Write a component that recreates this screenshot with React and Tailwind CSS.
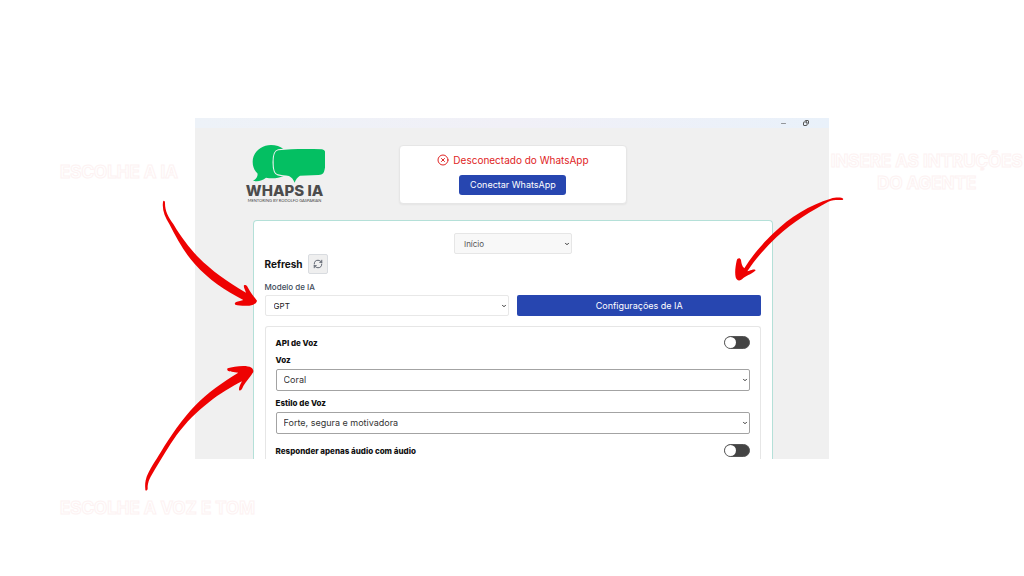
import { RefreshCw, CircleX, ChevronDown, Minus, Copy } from 'lucide-react';
import clsx from 'clsx';

const ARROWS = [
  {
    id: 'modelo',
    transform: 'translate(40 150) scale(0.3333)',
    d: 'M369 156C370 150 375 152 375 158C375 185 385 200 400 222C425 265 450 295 475 322C515 362 560 395 618 428C616 420 610 412 612 406C618 402 622 408 624 413C632 428 642 440 651 452C650 460 640 466 628 467C612 469 595 466 586 464C581 459 588 455 600 453L610 450C555 422 505 388 465 343C435 310 412 270 388 222C374 200 366 180 369 156Z',
  },
  {
    id: 'config',
    transform: 'translate(710 140) scale(0.3333)',
    d: 'M400 177C396 172 380 171 362 176C300 195 240 230 190 280C150 318 125 350 103 385C95 378 94 368 93 360C90 352 82 354 80 362C76 380 74 398 77 412C80 424 92 424 100 414C112 406 130 400 137 391C136 386 125 389 118 392L112 394C135 358 165 325 200 291C250 245 305 212 355 185C372 178 388 181 398 180Z',
  },
  {
    id: 'voz',
    transform: 'translate(40 350) scale(0.3333)',
    d: 'M316 418C315 424 323 422 323 416C322 395 332 380 345 358C365 325 385 290 410 255C440 215 470 185 505 158C540 130 575 110 606 94C602 102 596 112 597 120C603 126 607 114 610 108C618 94 632 80 640 66C642 54 630 48 610 48C592 48 575 52 563 55C558 62 568 66 580 66L595 68C550 95 500 130 465 167C427 207 393 255 363 305C345 335 330 355 320 380C315 395 315 405 316 418Z',
  },
];

function Caption({ children }) {
  return (
    <p className="whitespace-nowrap text-[17px] leading-[22px] font-bold text-white [-webkit-text-stroke:1px_#fdf2f2]">
      {children}
    </p>
  );
}

function Logo() {
  return (
    <div className="flex w-20 flex-col items-center">
      <svg viewBox="0 0 240 114" className="h-[38px] w-20" fill="#04bf62" aria-hidden="true">
        <path d="M78 0C48 0 23 22 23 50C23 65 28 76 38 86C38 95 33 103 24 107C38 111 52 107 63 98C80 102 100 100 115 94L118 14C106 4 92 0 78 0Z" />
        <path
          stroke="#f0f0f0"
          strokeWidth="7"
          paintOrder="stroke"
          d="M100 16C140 11 190 11 230 13C238 14 242 20 242 28C242 45 242 65 237 80C235 87 228 89 220 90L165 92C158 96 152 103 149 113C145 103 140 97 132 93C120 92 108 90 99 88C88 86 86 70 86 52C86 34 88 18 100 16Z"
        />
      </svg>
      <span className="whitespace-nowrap text-[15px] leading-[15px] font-extrabold text-[#4c4c4c]">WHAPS IA</span>
      <span className="whitespace-nowrap font-['Lato',sans-serif] text-[4px] leading-[6px] text-[#444]">MENTORING BY RODOLFO GASPARIAN</span>
    </div>
  );
}

function Select({ id, value, label, className, wrapperClass }) {
  return (
    <div className={clsx('relative', wrapperClass)}>
      <select
        id={id}
        aria-label={label}
        defaultValue={value}
        className={clsx('block w-full appearance-none rounded-[2px] border leading-3', className)}
      >
        <option>{value}</option>
      </select>
      <ChevronDown className="pointer-events-none absolute top-1/2 right-[2px] size-[6px] -translate-y-1/2 text-[#333]" strokeWidth={4} />
    </div>
  );
}

function ToggleRow({ id, label }) {
  return (
    <div className="flex h-[13px] items-center justify-between">
      <label htmlFor={id} className="text-[8px] leading-3 font-extrabold">{label}</label>
      <input
        id={id}
        type="checkbox"
        role="switch"
        className="flex h-[13px] w-[26px] appearance-none items-center rounded-full border border-[#555] bg-[#444] before:size-[11px] before:rounded-full before:bg-white"
      />
    </div>
  );
}

function StatusCard() {
  return (
    <section className="flex flex-col items-center gap-2 rounded border border-[#e6e6e6] bg-white pt-[7px] pb-2 shadow-xs">
      <p className="flex items-center gap-1 text-[10px] leading-[14px] text-[#e02424]">
        <CircleX size={12} />
        Desconectado do WhatsApp
      </p>
      <button type="button" className="h-5 w-[107px] rounded-[3px] bg-[#2746b0] text-[9px] leading-3 text-white">
        Conectar WhatsApp
      </button>
    </section>
  );
}

function SettingsPanel() {
  return (
    <main className="mt-4 mr-14 ml-[58px] rounded-t border border-b-0 border-[#b4e0d8] bg-white px-[11px] pt-3">
      <Select
        id="pagina"
        label="Página"
        value="Início"
        wrapperClass="mx-auto w-[118px]"
        className="h-[21px] border-[#e6e6e6] bg-[#f8f8f8] pl-[9px] text-[8px] text-[#555]"
      />

      <div className="flex items-center gap-[5px]">
        <h1 className="text-[10px] leading-5 font-bold text-[#111]">Refresh</h1>
        <button type="button" aria-label="Refresh" className="grid size-5 place-items-center rounded-[2px] border border-[#d9dce0] bg-[#efefef] text-[#444c59]">
          <RefreshCw size={10} />
        </button>
      </div>

      <label htmlFor="modelo" className="mt-[7px] mb-[2px] block text-[8px] leading-3 font-medium text-[#414b5a]">Modelo de IA</label>
      <div className="grid grid-cols-2 gap-2">
        <Select id="modelo" value="GPT" className="h-[21px] border-[#e8e8e8] bg-white pl-2 text-[8px] text-[#222]" />
        <button type="button" className="h-[21px] rounded-[2px] bg-[#2746b0] text-[9px] leading-3 text-white">
          Configurações de IA
        </button>
      </div>

      <section className="mt-[10px] rounded-t-[3px] border border-b-0 border-[#e6e6e6] px-[10px] pt-[9px] pb-[2px] text-[#111]">
        <ToggleRow id="api-voz" label="API de Voz" />
        <label htmlFor="voz" className="mt-[5px] mb-[3px] block text-[8px] leading-3 font-extrabold">Voz</label>
        <Select id="voz" value="Coral" className="h-[22px] border-[#a3a3a3] bg-white pl-[7px] text-[9px] text-[#333]" />
        <label htmlFor="estilo" className="mt-[6px] mb-[3px] block text-[8px] leading-3 font-extrabold">Estilo de Voz</label>
        <Select id="estilo" value="Forte, segura e motivadora" className="mb-[10px] h-[22px] border-[#a3a3a3] bg-white pl-[7px] text-[9px] text-[#333]" />
        <ToggleRow id="so-audio" label="Responder apenas áudio com áudio" />
      </section>
    </main>
  );
}

function AppWindow() {
  return (
    <div className="bg-[#f0f0f0]">
      <div className="flex h-[10px] items-center justify-end gap-4 bg-linear-to-r from-[#edf2f8] via-[#f1f0f7] to-[#e9f1fa] pr-5 text-[#555]">
        <Minus size={7} />
        <Copy size={6} strokeWidth={4} className="-scale-x-100" />
      </div>
      <header className="grid grid-cols-[1fr_228px_1fr] pt-[17px] pr-12 pl-[50px]">
        <Logo />
        <StatusCard />
      </header>
      <SettingsPanel />
    </div>
  );
}

export default function App() {
  return (
    <div className="relative grid min-h-screen grid-cols-[19%_62%_19%] items-start overflow-hidden bg-white pt-[118px] font-['Inter',sans-serif]">
      <div className="flex flex-col gap-[314px] pt-[43px] pl-[60px]">
        <Caption>ESCOLHE A IA</Caption>
        <Caption>ESCOLHE A VOZ E TOM</Caption>
      </div>
      <AppWindow />
      <div className="flex flex-col items-center pt-8 text-center">
        <Caption>INSERE AS INTRUÇÕES</Caption>
        <Caption>DO AGENTE</Caption>
      </div>

      <svg viewBox="0 0 1024 576" className="pointer-events-none absolute top-0 left-0 w-full" fill="#ee0202" aria-hidden="true">
        {ARROWS.map((a) => <path key={a.id} transform={a.transform} d={a.d} />)}
      </svg>
    </div>
  );
}
